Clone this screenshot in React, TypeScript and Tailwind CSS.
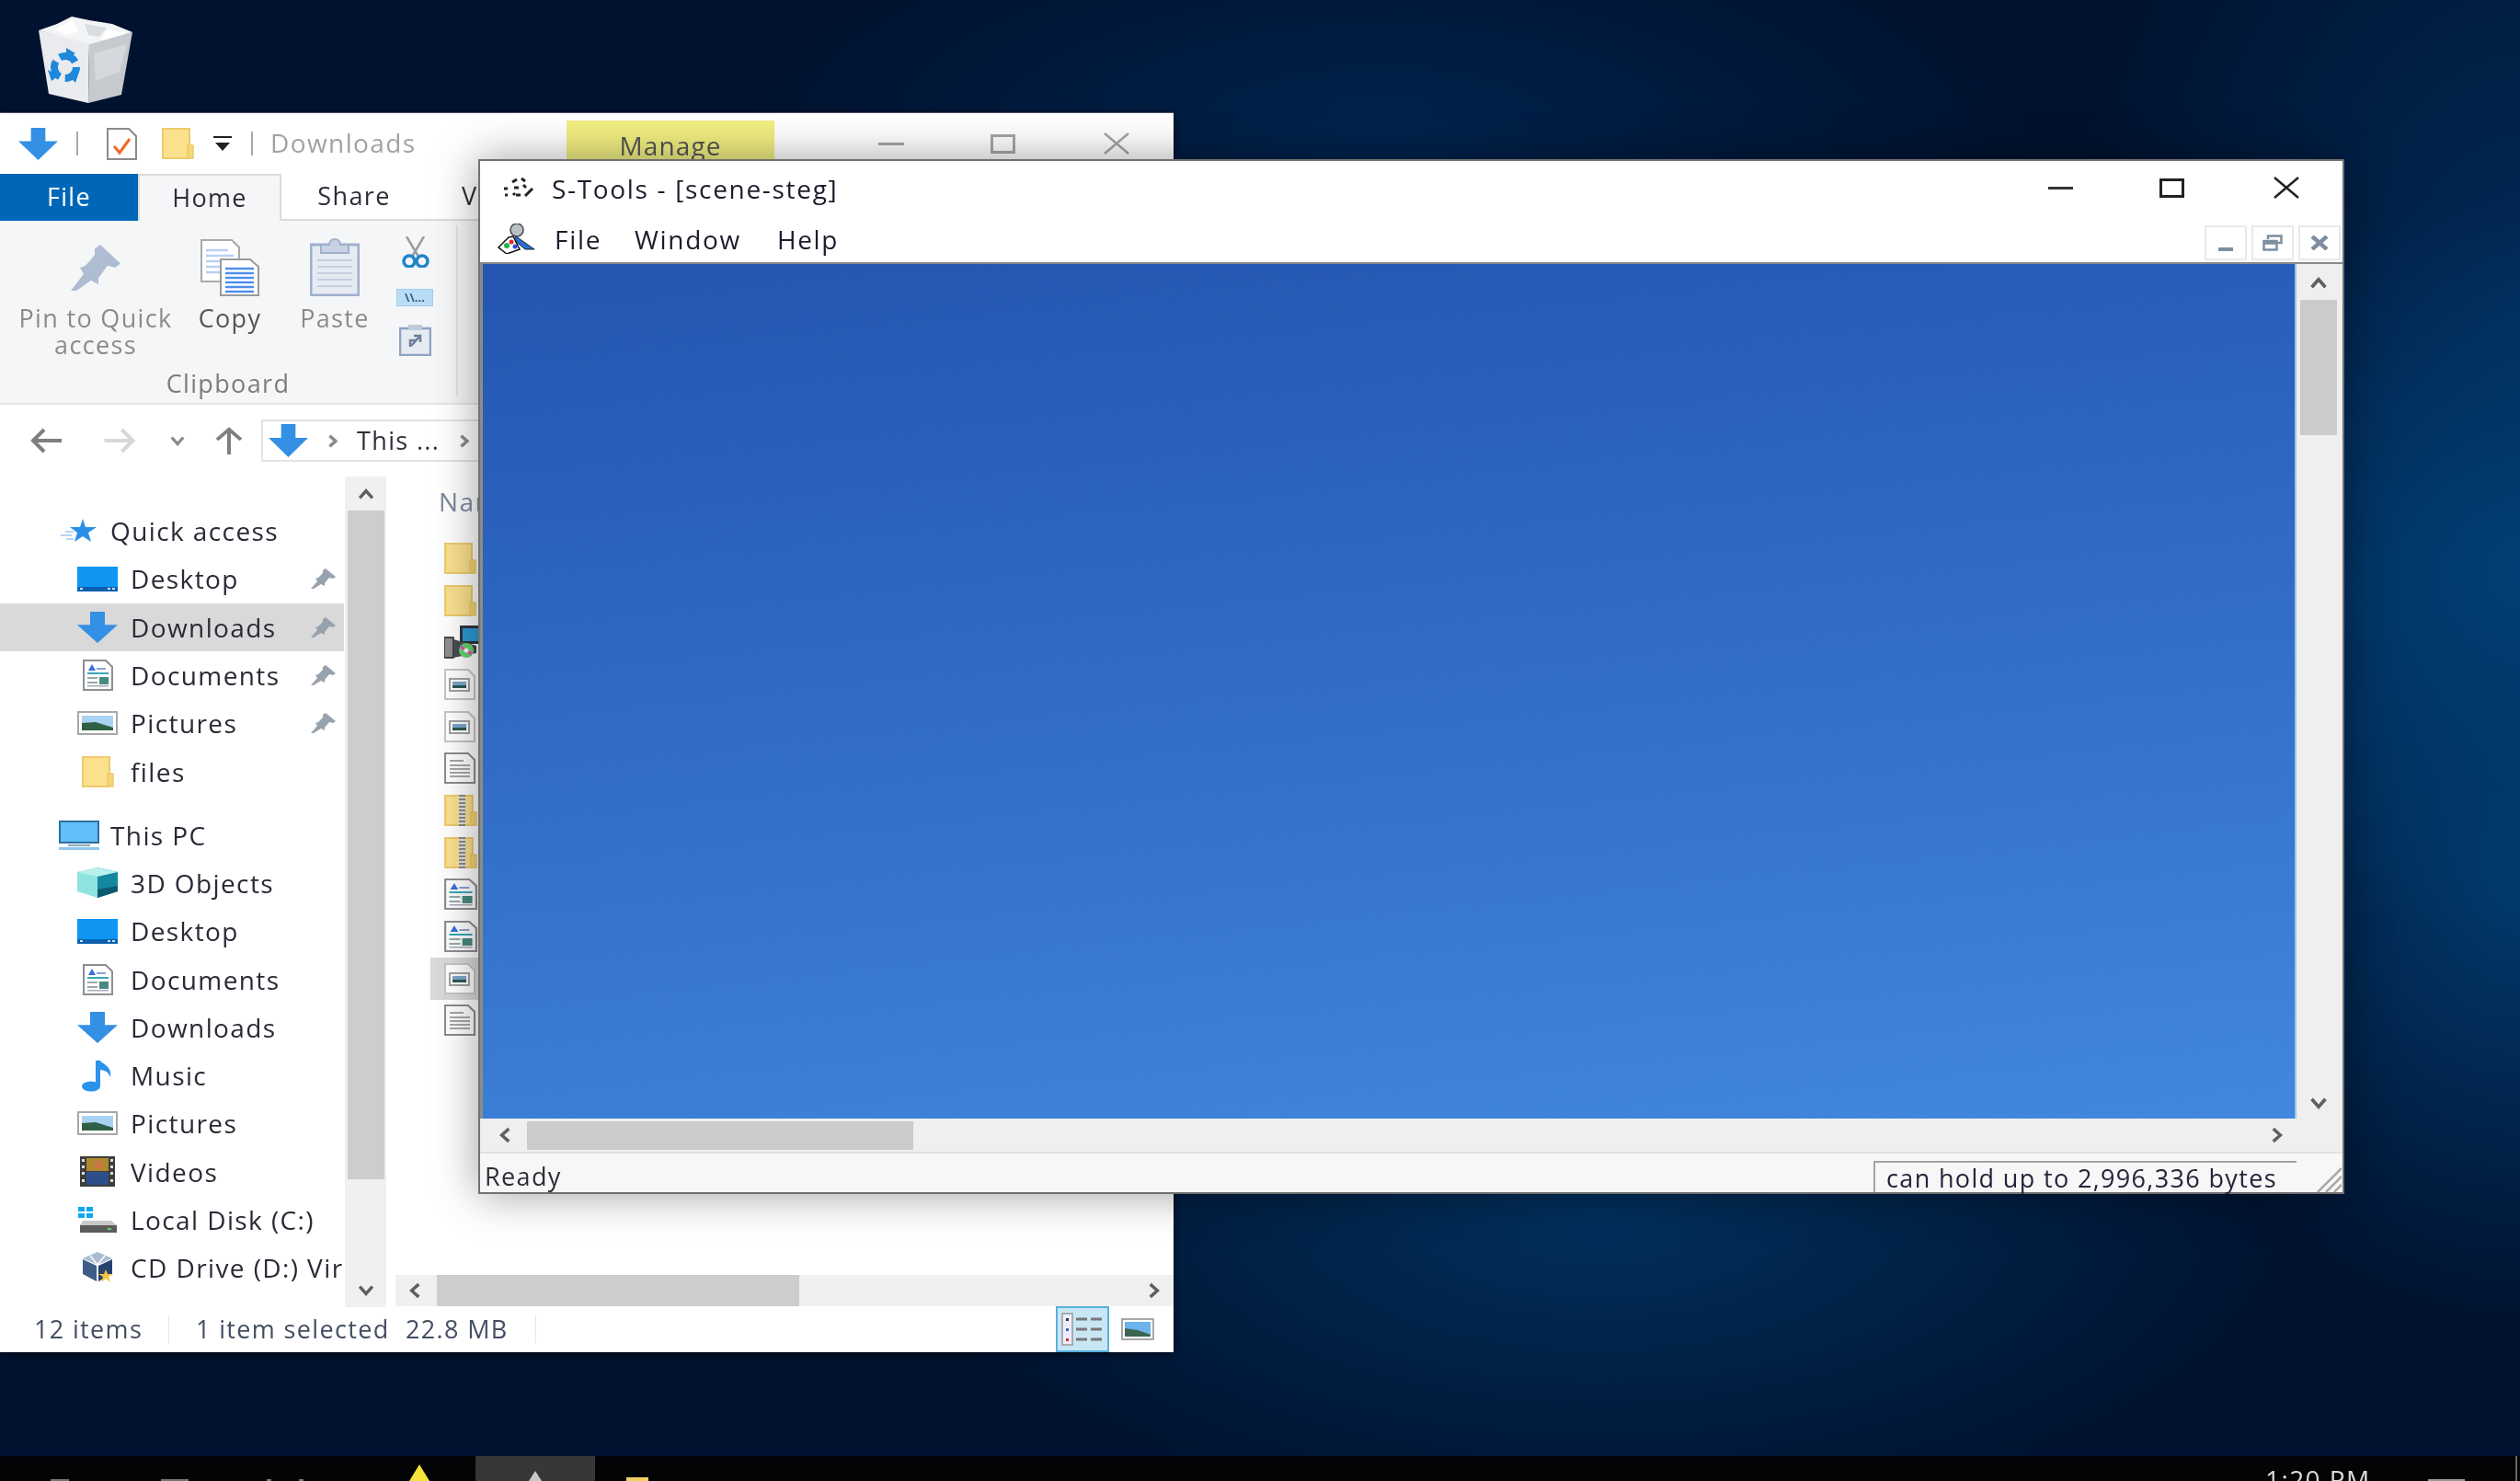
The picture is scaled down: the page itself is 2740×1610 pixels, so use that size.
import type { ReactNode } from "react";

function DownArrow({ className = "w-[43px] h-[35px]" }: { className?: string }) {
  return (
    <svg className={className} viewBox="0 0 44 36" preserveAspectRatio="none">
      <polygon points="14,0 30,0 30,15 44,15 22,36 0,15 14,15" fill="#3390e4" />
    </svg>
  );
}

function Folder({ className = "w-[35px] h-[34px]" }: { className?: string }) {
  return (
    <svg className={className} viewBox="0 0 35 34" preserveAspectRatio="none">
      <rect x="1" y="1" width="29" height="32" fill="#fbe08e" stroke="#eccb6a" strokeWidth="2" />
      <rect x="28" y="19" width="6" height="14" fill="#f6d672" stroke="#eccb6a" strokeWidth="1.5" />
    </svg>
  );
}

function DesktopIcon() {
  return (
    <svg className="w-[44px] h-[27px]" viewBox="0 0 44 27" preserveAspectRatio="none">
      <rect width="44" height="27" fill="#0f95f2" />
      <rect y="22" width="44" height="5" fill="#0a5fb0" />
      <rect x="3" y="23" width="3" height="2" fill="#cde" />
      <rect x="33" y="23" width="3" height="2" fill="#cde" />
      <rect x="38" y="23" width="3" height="2" fill="#cde" />
    </svg>
  );
}

function DocumentsIcon({ className = "w-[33px] h-[34px]" }: { className?: string }) {
  return (
    <svg className={className} viewBox="0 0 33 34" preserveAspectRatio="none">
      <polygon points="1,1 25,1 32,8 32,33 1,33" fill="#fff" stroke="#8f8f8f" strokeWidth="2" />
      <polygon points="6,12 10,5 14,12" fill="#3c6fe0" />
      <rect x="15" y="9" width="10" height="2" fill="#88a4d8" />
      <rect x="5" y="14" width="23" height="2" fill="#39a7b8" />
      <rect x="5" y="19" width="11" height="2" fill="#9aa" />
      <rect x="5" y="24" width="11" height="2" fill="#9aa" />
      <rect x="18" y="19" width="10" height="8" fill="#4a8a80" />
      <rect x="5" y="28" width="23" height="1.5" fill="#aab" />
    </svg>
  );
}

function PictureIcon() {
  return (
    <svg className="w-[44px] h-[26px]" viewBox="0 0 44 26" preserveAspectRatio="none">
      <rect x="1" y="1" width="42" height="24" fill="#fff" stroke="#a8a8a8" strokeWidth="2" />
      <rect x="5" y="5" width="34" height="16" fill="#a8d2f2" />
      <polygon points="5,13 20,12 39,18 39,21 5,21" fill="#2f5f44" />
    </svg>
  );
}

function Pin({ className = "w-[27px] h-[22px]", color = "#98a2ad" }: { className?: string; color?: string }) {
  return (
    <svg className={className} viewBox="0 0 27 22" preserveAspectRatio="none">
      <polygon points="16,0 27,9 24,11 20,10 15,16 15,19 11,17 3,22 0,22 7,14 5,11 8,10 13,5 13,2" fill={color} />
    </svg>
  );
}

function QuickStar() {
  return (
    <svg className="w-[40px] h-[28px]" viewBox="0 0 40 28">
      <polygon points="24,1 27,10 39,10 30,16 33,26 24,20 15,26 18,16 10,10 21,10" fill="#2b8fe6" />
      <path d="M0 19 H12 M5 15 H14 M6 23 H14" stroke="#9cc8ee" strokeWidth="1.5" />
    </svg>
  );
}

function MonitorIcon() {
  return (
    <svg className="w-[44px] h-[32px]" viewBox="0 0 44 32" preserveAspectRatio="none">
      <rect x="1" y="1" width="42" height="23" fill="#63bdf6" stroke="#2f6f9e" strokeWidth="2" />
      <rect x="10" y="26" width="24" height="2" fill="#8ab" />
      <rect y="29" width="44" height="3" fill="#8fc6ea" />
    </svg>
  );
}

function CubeIcon() {
  return (
    <svg className="w-[44px] h-[33px]" viewBox="0 0 44 33" preserveAspectRatio="none">
      <polygon points="22,0 44,5 44,26 22,33" fill="#13889e" />
      <polygon points="22,0 0,5 0,26 22,33" fill="#8fe3e0" />
      <polygon points="0,5 22,10 44,5 22,0" fill="#b8f0ee" />
      <polygon points="22,24 44,20 44,26 22,33" fill="#0b5a70" />
    </svg>
  );
}

function MusicIcon() {
  return (
    <svg className="w-[34px] h-[36px]" viewBox="0 0 34 36">
      <ellipse cx="10" cy="30" rx="10" ry="5.5" fill="#2a93ea" />
      <rect x="15" y="2" width="5" height="28" fill="#2a93ea" />
      <path d="M18 1 C24 6 33 9 31 20 C29 14 24 12 19 12 Z" fill="#2a93ea" />
    </svg>
  );
}

function VideoIcon() {
  return (
    <svg className="w-[38px] h-[33px]" viewBox="0 0 38 33" preserveAspectRatio="none">
      <rect width="38" height="33" fill="#3d3d3d" />
      <rect x="7" y="2" width="24" height="14" fill="#b0892c" />
      <rect x="7" y="17" width="24" height="14" fill="#2c4f8c" />
      <rect x="16" y="5" width="8" height="8" fill="#c74" />
      <rect x="2" y="3" width="3" height="3" fill="#ddd" />
      <rect x="2" y="10" width="3" height="3" fill="#ddd" />
      <rect x="2" y="17" width="3" height="3" fill="#ddd" />
      <rect x="2" y="25" width="3" height="3" fill="#ddd" />
      <rect x="33" y="3" width="3" height="3" fill="#ddd" />
      <rect x="33" y="10" width="3" height="3" fill="#ddd" />
      <rect x="33" y="17" width="3" height="3" fill="#ddd" />
      <rect x="33" y="25" width="3" height="3" fill="#ddd" />
    </svg>
  );
}

function DiskIcon() {
  return (
    <svg className="w-[42px] h-[28px]" viewBox="0 0 42 28" preserveAspectRatio="none">
      <rect x="0" y="0" width="7" height="5" fill="#12a8ee" />
      <rect x="9" y="0" width="7" height="5" fill="#12a8ee" />
      <rect x="0" y="7" width="7" height="5" fill="#12a8ee" />
      <rect x="9" y="7" width="7" height="5" fill="#12a8ee" />
      <polygon points="5,15 36,15 42,20 2,20" fill="#c8c8c8" />
      <rect x="2" y="20" width="40" height="8" fill="#5c5c5c" />
      <rect x="32" y="23" width="4" height="2" fill="#5fd35f" />
    </svg>
  );
}

function VBoxIcon() {
  return (
    <svg className="w-[36px] h-[36px]" viewBox="0 0 36 36">
      <polygon points="18,1 34,8 18,15 2,8" fill="#a9bcd2" />
      <polygon points="2,9 17,16 17,33 2,25" fill="#3d5c86" />
      <polygon points="34,9 19,16 19,33 34,25" fill="#26436d" />
      <path d="M10 5 L18 15 L26 5" stroke="#fff" strokeWidth="1.5" fill="none" />
      <polygon points="27,20 29,25 35,25 30,28 32,34 27,30 22,34 24,28 19,25 25,25" fill="#f4c542" />
    </svg>
  );
}

function InstallerIcon() {
  return (
    <svg className="w-[43px] h-[36px]" viewBox="0 0 43 36">
      <rect x="17" y="0" width="26" height="20" fill="#30343c" />
      <rect x="20" y="3" width="20" height="14" fill="#2d9bd6" />
      <rect x="0" y="13" width="10" height="22" fill="#8f8f8f" stroke="#222" strokeWidth="1.5" />
      <polygon points="10,15 35,22 35,30 10,35" fill="#474b52" />
      <circle cx="24" cy="27" r="8" fill="#67d36b" />
      <path d="M18 23 L30 31" stroke="#e84ac8" strokeWidth="3" />
      <circle cx="24" cy="27" r="2.5" fill="#fff" />
    </svg>
  );
}

function ImageFile() {
  return (
    <svg className="w-[34px] h-[34px]" viewBox="0 0 34 34" preserveAspectRatio="none">
      <polygon points="1,1 26,1 33,8 33,33 1,33" fill="#fff" stroke="#c6c6c6" strokeWidth="2" />
      <rect x="6" y="11" width="21" height="13" fill="#fff" stroke="#a2a2a2" strokeWidth="2" />
      <rect x="9" y="14" width="15" height="7" fill="#7ba6c8" />
      <rect x="9" y="18" width="15" height="3" fill="#2c5a52" />
    </svg>
  );
}

function TextFile() {
  return (
    <svg className="w-[34px] h-[34px]" viewBox="0 0 34 34" preserveAspectRatio="none">
      <polygon points="1,1 26,1 33,8 33,33 1,33" fill="#fff" stroke="#8c8c8c" strokeWidth="2" />
      <path d="M6 9 H21 M6 14 H28 M6 18 H28 M6 22 H28 M6 26 H28" stroke="#8c8c8c" strokeWidth="1.5" />
    </svg>
  );
}

function ZipFile() {
  return (
    <div className="relative w-[36px] h-[34px]">
      <Folder className="w-[36px] h-[34px]" />
      <div className="absolute left-[16px] top-0 w-[7px] h-[34px] bg-[repeating-linear-gradient(180deg,#8a8a8a_0px,#8a8a8a_2px,#e0e0e0_2px,#e0e0e0_4px)]" />
    </div>
  );
}

function Chevron({ dir, className = "w-[20px] h-[14px]", color = "#5f5f5f", sw = 4 }: { dir: "up" | "down" | "left" | "right"; className?: string; color?: string; sw?: number }) {
  const pts = {
    up: "2,12 10,3 18,12",
    down: "2,2 10,11 18,2",
    left: "12,2 3,10 12,18",
    right: "2,2 11,10 2,18",
  }[dir];
  const box = dir === "up" || dir === "down" ? "0 0 20 14" : "0 0 14 20";
  return (
    <svg className={className} viewBox={box}>
      <polyline points={pts} fill="none" stroke={color} strokeWidth={sw} />
    </svg>
  );
}

function NavRow({ icon, label, pinned, active }: { icon: ReactNode; label: string; pinned?: boolean; active?: boolean }) {
  return (
    <div className={active ? "flex items-center h-[52.3px] pl-[84px] bg-[#d9d9d9]" : "flex items-center h-[52.3px] pl-[84px]"}>
      <div className="w-[44px] flex justify-center shrink-0">{icon}</div>
      <span className="ml-[14px] whitespace-nowrap">{label}</span>
      {pinned && (
        <div className="ml-auto mr-[9px] shrink-0">
          <Pin />
        </div>
      )}
    </div>
  );
}

function NavHead({ icon, label }: { icon: ReactNode; label: string }) {
  return (
    <div className="flex items-center h-[52.3px] pl-[64px]">
      <div className="w-[44px] flex justify-center shrink-0">{icon}</div>
      <span className="ml-[12px] whitespace-nowrap">{label}</span>
    </div>
  );
}

function Explorer() {
  return (
    <div className="absolute left-0 top-[122px] w-[1276px] h-[1348px] bg-white border-t border-[#4a5260] flex flex-col shadow-[0_2px_8px_rgba(0,0,0,0.6)] text-[#2e2e38]">
      {/* title bar */}
      <div className="h-[66px] shrink-0 flex items-center relative">
        <div className="ml-[20px]">
          <DownArrow />
        </div>
        <div className="ml-[20px] w-[2px] h-[26px] bg-[#a9a9a9]" />
        <svg className="ml-[31px] w-[33px] h-[35px]" viewBox="0 0 33 35" preserveAspectRatio="none">
          <polygon points="1,1 24,1 32,9 32,34 1,34" fill="#fff" stroke="#8b8b8b" strokeWidth="2" />
          <polyline points="8,20 14,27 25,12" fill="none" stroke="#ef6a2c" strokeWidth="3" />
        </svg>
        <div className="ml-[27px]">
          <Folder />
        </div>
        <svg className="ml-[21px] w-[20px] h-[20px]" viewBox="0 0 20 20">
          <rect y="2" width="20" height="2" fill="#222" />
          <polygon points="2,9 18,9 10,18" fill="#222" />
        </svg>
        <div className="ml-[21px] w-[2px] h-[26px] bg-[#a9a9a9]" />
        <span className="ml-[19px] -mt-[2px] text-[28px] tracking-[0.05em] text-[#a2a2a2]">Downloads</span>
        <div className="absolute left-[616px] top-[8px] w-[226px] h-[58px] bg-[#f1ee80] text-center text-[#565656] text-[28px] tracking-[0.04em] pt-[6px]">Manage</div>
        <div className="ml-auto flex items-center">
          <div className="w-[28px] h-[3px] bg-[#a6a6a6]" />
          <div className="ml-[94px] w-[27px] h-[21px] border-[3px] border-[#a6a6a6]" />
          <svg className="ml-[96px] mr-[48px] w-[28px] h-[24px]" viewBox="0 0 28 24" preserveAspectRatio="none">
            <path d="M1 1 L27 23 M27 1 L1 23" stroke="#a6a6a6" strokeWidth="2.5" />
          </svg>
        </div>
      </div>

      {/* tabs */}
      <div className="h-[51px] shrink-0 flex border-b-2 border-[#dadbdc] text-[27px] tracking-[0.05em]">
        <div className="w-[150px] h-[51px] bg-[#0067b8] text-white flex items-center justify-center">File</div>
        <div className="w-[156px] h-[51px] bg-[#f5f6f7] border-x-2 border-t-2 border-[#dadbdc] flex items-center justify-center">Home</div>
        <div className="w-[158px] flex items-center justify-center">Share</div>
        <div className="ml-[38px] flex items-center">View</div>
      </div>

      {/* ribbon */}
      <div className="h-[200px] shrink-0 bg-[#f5f6f7] border-b-2 border-[#e4e5e6] flex text-[27px] tracking-[0.05em]">
        <div className="w-[498px] h-[186px] mt-[5px] border-r-2 border-[#e3e4e6] flex flex-col">
          <div className="flex h-[150px] text-[#8b8b8b]">
            <div className="w-[208px] shrink-0 flex flex-col items-center">
              <div className="h-[63px] mt-[14px] flex items-center">
                <Pin className="w-[54px] h-[50px]" color="#aebdd2" />
              </div>
              <div className="mt-[9px] leading-[29px] text-center whitespace-nowrap">
                Pin to Quick
                <br />
                access
              </div>
            </div>
            <div className="w-[84px] shrink-0 flex flex-col items-center text-[#555]">
              <div className="h-[63px] mt-[14px] flex items-center">
                <svg className="w-[64px] h-[62px]" viewBox="0 0 64 62" preserveAspectRatio="none">
                  <polygon points="1,1 34,1 42,9 42,46 1,46" fill="#fff" stroke="#a9a9a9" strokeWidth="2" />
                  <path d="M6 12 H30 M6 18 H36 M6 24 H36 M6 30 H36 M6 36 H36" stroke="#b8d0f4" strokeWidth="2.5" />
                  <polygon points="22,22 54,22 63,30 63,61 22,61" fill="#fff" stroke="#9a9a9a" strokeWidth="2" />
                  <path d="M27 32 H58 M27 37 H58 M27 42 H58 M27 47 H58 M27 52 H58 M27 57 H58" stroke="#4f8fef" strokeWidth="2.5" />
                </svg>
              </div>
              <div className="mt-[9px] leading-[29px]">Copy</div>
            </div>
            <div className="w-[144px] shrink-0 flex flex-col items-center">
              <div className="h-[63px] mt-[14px] flex items-center">
                <svg className="w-[54px] h-[63px]" viewBox="0 0 54 63" preserveAspectRatio="none">
                  <rect x="1" y="7" width="52" height="55" fill="#e6ebf3" stroke="#9fb0cc" strokeWidth="3" />
                  <path d="M8 24 H46 M8 31 H46 M8 38 H46 M8 45 H46 M8 52 H46" stroke="#c4cfe0" strokeWidth="2" />
                  <path d="M12 7 H21 C21 -1 33 -1 33 7 H42 V16 H12 Z" fill="#c7d2e3" stroke="#9fb0cc" strokeWidth="2" />
                </svg>
              </div>
              <div className="mt-[9px] leading-[29px]">Paste</div>
            </div>
            <div className="w-[30px] shrink-0 flex flex-col items-center">
              <svg className="mt-[12px] shrink-0 w-[31px] h-[34px]" viewBox="0 0 31 34" preserveAspectRatio="none">
                <path d="M6 0 L19 22 M25 0 L12 22" stroke="#9c9c9c" strokeWidth="2.5" />
                <circle cx="9" cy="27" r="6" fill="none" stroke="#1f86c9" strokeWidth="3.5" />
                <circle cx="23" cy="27" r="6" fill="none" stroke="#1f86c9" strokeWidth="3.5" />
              </svg>
              <div className="mt-[23px] shrink-0 w-[40px] h-[19px] bg-[#b9dcf7] border border-[#a5cdee] text-[#345a80] text-[13px] leading-[16px] text-center font-bold tracking-normal">\\...</div>
              <svg className="mt-[20px] shrink-0 w-[35px] h-[34px]" viewBox="0 0 35 34" preserveAspectRatio="none">
                <rect x="1" y="4" width="33" height="29" fill="#e6ebf3" stroke="#8ea3c4" strokeWidth="2.5" />
                <rect x="10" y="0" width="15" height="6" fill="#bfcbdd" />
                <path d="M12 24 V17 H19 M13 23 L22 13 M16 12 H23 V19" stroke="#6c7f9c" strokeWidth="2.5" fill="none" />
              </svg>
            </div>
          </div>
          <div className="h-[30px] mt-[13px] leading-[30px] text-center text-[#7c7c7c]">Clipboard</div>
        </div>
      </div>

      {/* address bar */}
      <div className="h-[78px] shrink-0 flex items-center">
        <svg className="ml-[33px] w-[34px] h-[28px]" viewBox="0 0 34 28">
          <path d="M34 14 H4 M15 2 L3 14 L15 26" fill="none" stroke="#7f7f7f" strokeWidth="4" />
        </svg>
        <svg className="ml-[46px] w-[35px] h-[28px]" viewBox="0 0 34 28">
          <path d="M0 14 H30 M19 2 L31 14 L19 26" fill="none" stroke="#d8d8d8" strokeWidth="4" />
        </svg>
        <Chevron dir="down" className="ml-[37px] w-[16px] h-[11px]" color="#8a8a8a" />
        <svg className="ml-[33px] w-[30px] h-[30px]" viewBox="0 0 30 34" preserveAspectRatio="none">
          <path d="M15 34 V4 M2 16 L15 3 L28 16" fill="none" stroke="#7f7f7f" strokeWidth="4" />
        </svg>
        <div className="ml-[20px] flex-1 h-[46px] border-2 border-[#e3e3e3] flex items-center text-[27px] tracking-[0.05em] text-[#2e2e38]">
          <DownArrow className="ml-[6px] w-[43px] h-[36px]" />
          <Chevron dir="right" className="ml-[22px] w-[10px] h-[15px]" color="#8a8a8a" sw={5} />
          <span className="ml-[21px]">This ...</span>
          <Chevron dir="right" className="ml-[22px] w-[10px] h-[15px]" color="#8a8a8a" sw={5} />
        </div>
      </div>

      {/* main */}
      <div className="flex-1 min-h-0 flex">
        <div className="w-[374px] shrink-0 pt-[33px] overflow-hidden text-[28px] tracking-[0.05em] text-[#2a2a36]">
          <NavHead icon={<QuickStar />} label="Quick access" />
          <NavRow icon={<DesktopIcon />} label="Desktop" pinned />
          <NavRow icon={<DownArrow className="w-[44px] h-[34px]" />} label="Downloads" pinned active />
          <NavRow icon={<DocumentsIcon />} label="Documents" pinned />
          <NavRow icon={<PictureIcon />} label="Pictures" pinned />
          <NavRow icon={<Folder />} label="files" />
          <div className="mt-[16.7px]">
            <NavHead icon={<MonitorIcon />} label="This PC" />
          </div>
          <NavRow icon={<CubeIcon />} label="3D Objects" />
          <NavRow icon={<DesktopIcon />} label="Desktop" />
          <NavRow icon={<DocumentsIcon />} label="Documents" />
          <NavRow icon={<DownArrow className="w-[44px] h-[34px]" />} label="Downloads" />
          <NavRow icon={<MusicIcon />} label="Music" />
          <NavRow icon={<PictureIcon />} label="Pictures" />
          <NavRow icon={<VideoIcon />} label="Videos" />
          <NavRow icon={<DiskIcon />} label="Local Disk (C:)" />
          <NavRow icon={<VBoxIcon />} label="CD Drive (D:) Vir" />
        </div>
        <div className="w-[45px] shrink-0 ml-px h-[903px] bg-[#f0f0f0] flex flex-col items-center relative">
          <Chevron dir="up" className="mt-[13px] w-[20px] h-[12px]" />
          <div className="mt-[12px] w-[40px] h-[727px] bg-[#cdcdcd]" />
          <Chevron dir="down" className="mt-[115px] w-[20px] h-[12px]" />
        </div>
        <div className="flex-1 min-w-0 ml-[10px] flex flex-col">
          <div className="flex-1 min-h-0">
            <div className="h-[66px] pl-[47px] pt-[6px] text-[28px] tracking-[0.05em] text-[#7c8aa0]">Name</div>
            {[<Folder />, <Folder />, <InstallerIcon />, <ImageFile />, <ImageFile />, <TextFile />, <ZipFile />, <ZipFile />, <DocumentsIcon className="w-[36px] h-[34px]" />, <DocumentsIcon className="w-[36px] h-[34px]" />].map((icon, i) => (
              <div key={i} className="h-[45.7px] pl-[53px] flex items-center">
                {icon}
              </div>
            ))}
            <div className="h-[45.7px] ml-[38px] pl-[15px] flex items-center bg-[#d9d9d9]">
              <ImageFile />
            </div>
            <div className="h-[45.7px] pl-[53px] flex items-center">
              <TextFile />
            </div>
          </div>
          <div className="h-[34px] shrink-0 bg-[#f0f0f0] flex items-center">
            <Chevron dir="left" className="ml-[15px] w-[12px] h-[20px]" />
            <div className="ml-[18px] w-[394px] h-[34px] bg-[#cdcdcd]" />
            <Chevron dir="right" className="ml-auto mr-[15px] w-[12px] h-[20px]" />
          </div>
        </div>
      </div>

      {/* status bar */}
      <div className="h-[50px] shrink-0 flex items-center text-[27px] tracking-[0.05em] text-[#444e62] whitespace-nowrap">
        <span className="ml-[37px] w-[146px]">12 items</span>
        <div className="w-px h-[30px] bg-[#e6e6e6]" />
        <span className="ml-[29px] w-[228px]">1 item selected</span>
        <span className="w-[141px]">22.8 MB</span>
        <div className="w-px h-[30px] bg-[#e6e6e6]" />
        <div className="ml-[565px] w-[58px] h-[50px] bg-[#c9e6f5] border-2 border-[#5ab0dc] flex items-center justify-center">
          <svg className="w-[46px] h-[36px]" viewBox="0 0 46 36" preserveAspectRatio="none">
            <rect x="1" y="1" width="11" height="34" fill="#eef" stroke="#999" strokeWidth="1.5" />
            <rect x="5" y="6" width="3" height="3" fill="#336" />
            <rect x="5" y="17" width="3" height="3" fill="#36c" />
            <rect x="5" y="28" width="3" height="3" fill="#c33" />
            <path d="M16 7 H28 M32 7 H44 M16 18 H28 M32 18 H44 M16 29 H28 M32 29 H44" stroke="#777" strokeWidth="3" />
          </svg>
        </div>
        <svg className="ml-[13px] w-[36px] h-[24px]" viewBox="0 0 36 24" preserveAspectRatio="none">
          <rect x="1" y="1" width="34" height="22" fill="#fff" stroke="#a8a8a8" strokeWidth="2" />
          <rect x="4" y="4" width="28" height="16" fill="#6fb1ea" />
          <polygon points="4,11 18,13 32,18 32,20 4,20" fill="#3b6650" />
        </svg>
      </div>
    </div>
  );
}

function STools() {
  return (
    <div className="absolute left-[520px] top-[173px] w-[2029px] h-[1125px] bg-white border-2 border-[#717171] flex flex-col shadow-[0_0_45px_rgba(0,0,0,0.38)] text-[#1c1c2c]">
      <div className="h-[58px] shrink-0 flex items-center text-[28px] tracking-[0.06em]">
        <svg className="ml-[25px] w-[34px] h-[26px]" viewBox="0 0 34 26">
          <path d="M1 14 h4 M2 21 h3 M10 7 l5 -3 M12 13 h5 M14 21 h5 M20 3 l4 3 M22 10 l3 3 M24 22 l8 -8 M11 19 l2 2" stroke="#222" strokeWidth="3" fill="none" />
        </svg>
        <span className="ml-[19px] mt-[2px]">S-Tools - [scene-steg]</span>
        <div className="ml-auto flex items-center">
          <div className="w-[27px] h-[3px] bg-[#333]" />
          <div className="ml-[94px] w-[27px] h-[21px] border-[3px] border-[#222]" />
          <svg className="ml-[97px] mr-[47px] w-[28px] h-[24px]" viewBox="0 0 28 24" preserveAspectRatio="none">
            <path d="M1 1 L27 23 M27 1 L1 23" stroke="#222" strokeWidth="2.5" />
          </svg>
        </div>
      </div>
      <div className="h-[52px] shrink-0 flex items-center text-[28px] tracking-[0.06em]">
        <svg className="ml-[19px] w-[41px] h-[33px]" viewBox="0 0 41 33">
          <ellipse cx="21" cy="7" rx="7" ry="7" fill="#b8c2c4" stroke="#445" strokeWidth="1.5" />
          <polygon points="20,14 40,28 30,28 18,18" fill="#2a6fd0" stroke="#123" strokeWidth="1" />
          <polygon points="12,15 1,26 10,33 24,28 17,14" fill="#fff" stroke="#111" strokeWidth="1.5" />
          <circle cx="10" cy="24" r="3" fill="#26b14a" />
          <circle cx="15" cy="20" r="2.5" fill="#e62b2b" />
          <circle cx="19" cy="25" r="2.5" fill="#2b49e6" />
        </svg>
        <span className="ml-[21px] mt-[2px]">File</span>
        <span className="ml-[36px] mt-[2px]">Window</span>
        <span className="ml-[39px] mt-[2px]">Help</span>
        <div className="ml-auto flex items-end h-[38px] mt-[10px] mr-[2px] gap-[5px]">
          <div className="w-[46px] h-[38px] border-2 border-[#e9e9e9] flex items-end justify-center pb-[8px]">
            <div className="w-[16px] h-[4px] bg-[#7e8ea0]" />
          </div>
          <div className="w-[46px] h-[38px] border-2 border-[#e9e9e9] flex items-center justify-center">
            <svg className="w-[22px] h-[18px]" viewBox="0 0 22 18">
              <path d="M6 5 V1.5 H20.5 V9 H16 M1.5 7 H15.5 V16.5 H1.5 Z M1.5 9.5 H15.5" fill="none" stroke="#7e8ea0" strokeWidth="2.5" />
            </svg>
          </div>
          <div className="w-[46px] h-[38px] border-2 border-[#e9e9e9] flex items-center justify-center">
            <svg className="w-[20px] h-[16px]" viewBox="0 0 20 16">
              <path d="M2 1 L18 15 M18 1 L2 15" stroke="#7e8ea0" strokeWidth="4.5" />
            </svg>
          </div>
        </div>
      </div>
      <div className="h-[2px] shrink-0 bg-[#8a8a8a]" />
      <div className="h-[929px] shrink-0 flex pl-[3px] bg-[#8c8c8c]">
        <div className="relative flex-1 min-w-0 bg-[linear-gradient(174deg,#1f52b0_0%,#2660bf_30%,#3172cf_65%,#3d86e0_100%)] overflow-hidden border-r-2 border-[#9fc2ee]">
          <svg className="absolute inset-0 w-full h-full opacity-[0.07]">
            <filter id="grain">
              <feTurbulence type="fractalNoise" baseFrequency="0.7" numOctaves="2" />
              <feColorMatrix type="saturate" values="0" />
            </filter>
            <rect width="100%" height="100%" filter="url(#grain)" />
          </svg>
        </div>
        <div className="w-[50px] shrink-0 bg-[#efefef] flex flex-col items-center pr-[3px]">
          <Chevron dir="up" className="mt-[14px] w-[20px] h-[13px]" />
          <div className="mt-[12px] w-[40px] h-[147px] bg-[#cbcbcb]" />
          <Chevron dir="down" className="mt-[720px] w-[20px] h-[13px]" />
        </div>
      </div>
      <div className="h-[38px] shrink-0 bg-[#efefef] flex items-center border-b-2 border-[#e2e2e2]">
        <Chevron dir="left" className="ml-[21px] w-[12px] h-[20px]" />
        <div className="ml-[18px] w-[420px] h-[31px] bg-[#cbcbcb]" />
        <Chevron dir="right" className="ml-[1477px] w-[12px] h-[20px]" />
      </div>
      <div className="flex-1 min-h-0 flex items-end bg-[#f7f7f7] text-[27px] tracking-[0.05em]">
        <span className="ml-[5px] self-center pt-[8px] text-[#2e2e38]">Ready</span>
        <div className="ml-auto w-[460px] h-[34px] border-t-2 border-l-2 border-[#a3a3a3] pl-[12px] leading-[33px] text-[#24243a] whitespace-nowrap">can hold up to 2,996,336 bytes</div>
        <svg className="ml-[19px] mr-px w-[30px] h-[30px]" viewBox="0 0 30 30">
          <path d="M4 30 L30 4 M13 30 L30 13 M22 30 L30 22" stroke="#a8a8a8" strokeWidth="2.5" />
        </svg>
      </div>
    </div>
  );
}

function RecycleBin() {
  return (
    <svg className="absolute left-[42px] top-[18px] w-[102px] h-[94px]" viewBox="0 0 102 94" preserveAspectRatio="none">
      <polygon points="0,15 55,28 54,94 11,84" fill="#e9ebee" />
      <polygon points="55,28 102,17 90,85 54,94" fill="#c6cacf" />
      <polygon points="60,40 96,30 88,60 62,70" fill="#d5d8dc" />
      <polygon points="0,15 20,8 36,0 55,4 80,8 102,17 56,30" fill="#f3f4f5" />
      <polygon points="18,14 36,4 44,16 30,20" fill="#ffffff" />
      <polygon points="50,8 74,12 66,22 54,20" fill="#d9dce0" />
      <polygon points="74,14 96,18 68,26" fill="#ffffff" />
      <circle cx="29" cy="55" r="12" fill="none" stroke="#1e88dc" strokeWidth="8" strokeDasharray="19 6" />
      <polygon points="30,34 40,40 30,46" fill="#1e88dc" />
      <polygon points="44,60 40,72 32,64" fill="#1e88dc" />
      <polygon points="10,58 22,64 14,70" fill="#1e88dc" />
    </svg>
  );
}

export default function App() {
  return (
    <div className="relative w-[2740px] h-[1610px] overflow-hidden font-['Open_Sans',sans-serif] blur-[0.7px] bg-[#00122f] bg-[radial-gradient(ellipse_520px_400px_at_2760px_620px,#023f76_0%,rgba(2,63,118,0)_100%),radial-gradient(ellipse_420px_480px_at_2740px_960px,#02396c_0%,rgba(2,57,108,0)_100%),radial-gradient(ellipse_760px_340px_at_1740px_1320px,#01305c_0%,rgba(1,48,92,0)_100%),radial-gradient(ellipse_700px_260px_at_1500px_150px,#00234d_0%,rgba(0,35,77,0)_100%),radial-gradient(ellipse_500px_700px_at_2750px_350px,#012a56_0%,rgba(1,42,86,0)_100%)]">
      <RecycleBin />
      <Explorer />
      <STools />

      {/* taskbar, cut off by the screen edge */}
      <div className="absolute inset-x-0 bottom-0 h-[27px] bg-[#040406] overflow-hidden flex text-[#dcdcdc]">
        <div className="ml-[55px] mt-[25px] w-[20px] h-[2px] bg-[#777]" />
        <div className="ml-[100px] mt-[25px] w-[30px] h-[2px] bg-[#777]" />
        <div className="ml-[85px] mt-[25px] w-[5px] h-[2px] bg-[#777]" />
        <div className="ml-[30px] mt-[25px] w-[5px] h-[2px] bg-[#777]" />
        <svg className="ml-[115px] mt-[9px] w-[22px] h-[18px]" viewBox="0 0 22 18">
          <polygon points="11,0 22,18 0,18" fill="#f4e33a" />
        </svg>
        <div className="ml-[50px] w-[130px] h-[27px] bg-[#373737] flex justify-center">
          <svg className="mt-[16px] w-[14px] h-[11px]" viewBox="0 0 14 11">
            <polygon points="7,0 14,11 0,11" fill="#c9c9c9" />
          </svg>
        </div>
        <div className="ml-[34px] mt-[23px] w-[24px] h-[4px] bg-[#f0d060]" />
        <div className="ml-auto w-[112px] text-[28px] leading-[32px] mt-[9px] whitespace-nowrap tracking-[0.05em]">1:20 PM</div>
        <div className="ml-[65px] mt-[25px] w-[40px] h-[2px] bg-[#999]" />
        <div className="ml-[55px] mr-[3px] w-[2px] h-[27px] bg-[#666]" />
      </div>
    </div>
  );
}
